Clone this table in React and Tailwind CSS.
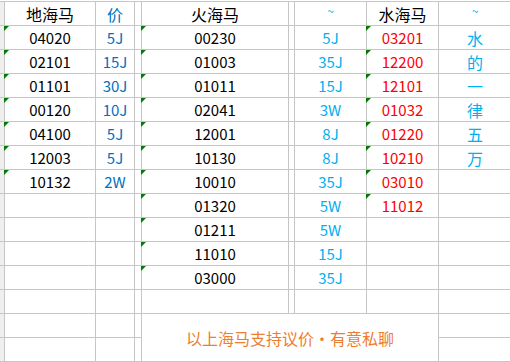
const di = [
    ['04020', '5J'], ['02101', '15J'], ['01101', '30J'], ['00120', '10J'],
    ['04100', '5J'], ['12003', '5J'], ['10132', '2W'],
];
const huo = [
    ['00230', '5J'], ['01003', '35J'], ['01011', '15J'], ['02041', '3W'],
    ['12001', '8J'], ['10130', '8J'], ['10010', '35J'], ['01320', '5W'],
    ['01211', '5W'], ['11010', '15J'], ['03000', '35J'],
];
const shui = ['03201', '12200', '12101', '01032', '01220', '10210', '03010', '11012'];
const note = ['水', '的', '一', '律', '五', '万'];

const Mark = () => (
    <span className="absolute -left-px top-0 w-[5px] h-[5px] bg-[#007a00] [clip-path:polygon(0_0,100%_0,0_100%)]" />
);

const Cell = ({ children, mark, className = '' }) => (
    <div className={`relative bg-white flex items-center justify-center leading-none ${className}`}>
        {mark && <Mark />}
        {children}
    </div>
);

const App = () => {
    const rows = [];
    for (let i = 1; i <= 14; i++) {
        const d = di[i - 1];
        const h = huo[i - 1];
        const s = shui[i - 1];
        const n = note[i - 1];
        rows.push(
            <div key={'s' + i} className="bg-[#efefef]" />,
            <Cell key={'d' + i} mark={!!d} className="text-black">{d && d[0]}</Cell>,
            <Cell key={'p' + i} className="text-[#0070c0]">{d && d[1]}</Cell>,
            <Cell key={'n' + i} />
        );
        if (i <= 12) {
            rows.push(
                <Cell key={'h' + i} mark={!!h} className="text-black">{h && h[0]}</Cell>,
                <Cell key={'m' + i} />,
                <Cell key={'q' + i} className="text-[#00b0f0]">{h && h[1]}</Cell>,
                <Cell key={'w' + i} mark={!!s} className="text-[#ff0000]">{s}</Cell>
            );
        } else if (i === 13) {
            rows.push(
                <Cell key="merged" className="col-span-4 row-span-2 text-[#ed7d31] text-[16px]">
                    以上海马支持议价<span className="inline-block w-[16px] text-center">·</span>有意私聊
                </Cell>
            );
        }
        rows.push(<Cell key={'x' + i} className="text-[#00b0f0] text-[16px]">{n}</Cell>);
    }

    return (
        <div className="w-[510px] h-[362px] bg-white pt-px overflow-hidden font-['Noto_Sans_CJK_SC',sans-serif] text-[15px]">
            <div className="grid grid-cols-[4px_90px_38px_6px_146px_5px_71px_71px_72px] auto-rows-[23px] gap-px bg-[#c6c6c6] border-y border-[#c6c6c6]">
                {/* header */}
                <div className="bg-[#efefef]" />
                <Cell className="text-black text-[16px]">地海马</Cell>
                <Cell className="text-[#0070c0] text-[16px]">价</Cell>
                <Cell />
                <Cell className="text-black text-[16px]">火海马</Cell>
                <Cell />
                <Cell className="text-[#00b0f0] text-[12px] items-start pt-[3px]">~</Cell>
                <Cell className="text-black text-[16px]">水海马</Cell>
                <Cell className="text-[#00b0f0] text-[12px] items-start pt-[3px]">~</Cell>
                {rows}
            </div>
        </div>
    );
};

export default App;
